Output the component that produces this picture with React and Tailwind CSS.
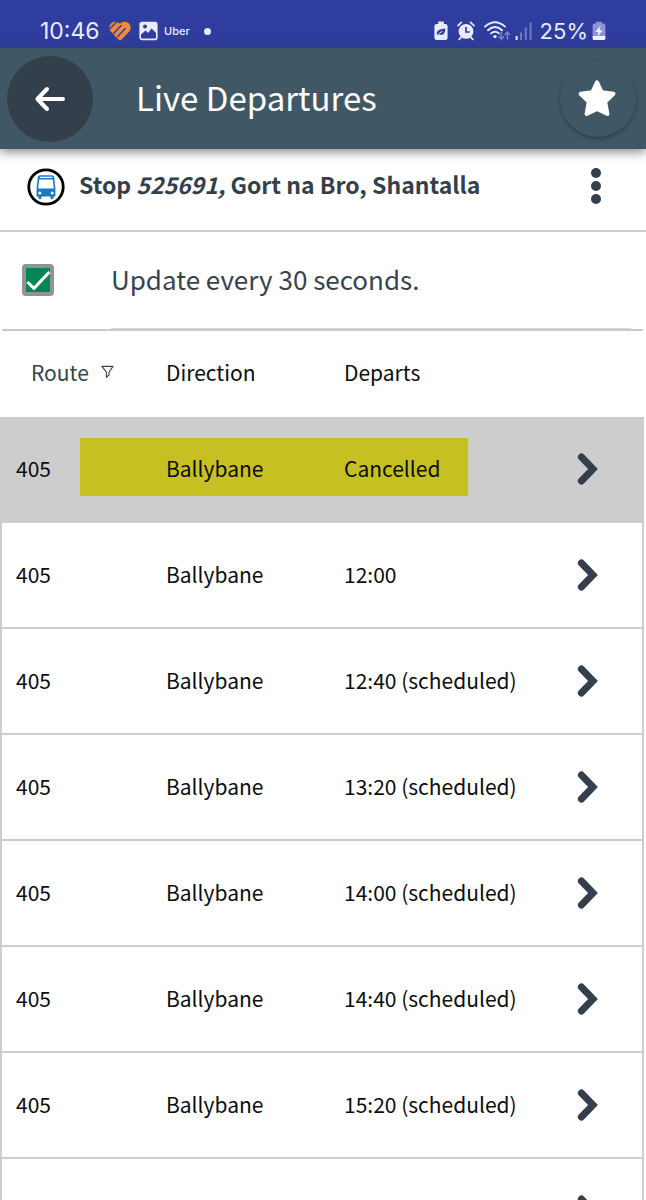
import { useState } from 'react';

const departures = [
  { route: '405', direction: 'Ballybane', departs: 'Cancelled', cancelled: true },
  { route: '405', direction: 'Ballybane', departs: '12:00' },
  { route: '405', direction: 'Ballybane', departs: '12:40 (scheduled)' },
  { route: '405', direction: 'Ballybane', departs: '13:20 (scheduled)' },
  { route: '405', direction: 'Ballybane', departs: '14:00 (scheduled)' },
  { route: '405', direction: 'Ballybane', departs: '14:40 (scheduled)' },
  { route: '405', direction: 'Ballybane', departs: '15:20 (scheduled)' },
  { route: '', direction: '', departs: '' },
];

function HeartIcon() {
  return (
    <svg width="22" height="20" viewBox="0 0 22 20" fill="none" strokeLinecap="round" aria-hidden="true">
      <path d="M11 3 C9 0.2 4.4 0 2 2.6 C-0.4 5.2 0 8.6 2.2 11 L9.4 18.6 Q11 20 12.6 18.6 L19.8 11 C22 8.6 22.4 5.2 20 2.6 C17.6 0 13 0.2 11 3 Z" fill="#f5893b" />
      <path d="M0.6 8 L7.6 1" stroke="#2f3d9e" strokeWidth="1.3" />
      <path d="M4.6 12.4 L12.2 4.4" stroke="#2f3d9e" strokeWidth="1.4" />
      <path d="M8.8 15.6 L16.2 7.6" stroke="#2f3d9e" strokeWidth="1.4" />
    </svg>
  );
}

function PictureIcon() {
  return (
    <svg width="19" height="20" viewBox="0 0 19 20" aria-hidden="true">
      <rect x="0.4" y="0.8" width="18.2" height="18.4" rx="2.6" fill="#e9ebfa" />
      <path d="M2 13.6 L6.6 9.4 L9 12 L12.6 7.6 L17 12 V16.4 Q17 17.4 16 17.4 H3 Q2 17.4 2 16.4 Z" fill="#2f3d9e" />
      <circle cx="6" cy="5.4" r="2" fill="#2f3d9e" />
    </svg>
  );
}

function BatterySaverIcon() {
  return (
    <svg width="14" height="20" viewBox="0 0 14 20" aria-hidden="true">
      <path d="M4.2 0.6 H9.8 V3 H11.4 Q13.6 3 13.6 5.2 V16.8 Q13.6 19 11.4 19 H2.6 Q0.4 19 0.4 16.8 V5.2 Q0.4 3 2.6 3 H4.2 Z" fill="#e9ebfa" />
      <path d="M2.8 13.6 C2.6 9 5.4 8.2 11.2 7.4 C11.4 12 9.2 15 5 13.4 M3 14.4 L8.2 10.4" fill="#2f3d9e" />
      <path d="M4.6 13 L8.4 10" stroke="#e9ebfa" strokeWidth="1" />
    </svg>
  );
}

function AlarmIcon() {
  return (
    <svg width="18" height="20" viewBox="0 0 18 20" aria-hidden="true">
      <circle cx="9" cy="10.4" r="7.4" fill="#e9ebfa" />
      <path d="M1 4.6 L4.4 1.4 M17 4.6 L13.6 1.4 M4 16.4 L2.2 18.4 M14 16.4 L15.8 18.4" stroke="#e9ebfa" strokeWidth="1.7" strokeLinecap="round" />
      <path d="M9 6 V11 H12.8" fill="none" stroke="#2f3d9e" strokeWidth="1.7" />
    </svg>
  );
}

function WifiIcon() {
  return (
    <svg width="27" height="20" viewBox="0 0 27 20" fill="none" strokeLinecap="round" aria-hidden="true">
      <path d="M1 5.6 Q11 -3 21 5.6" stroke="#e9ebfa" strokeWidth="1.9" />
      <path d="M4 9.2 Q11 3 18 9.2" stroke="#e9ebfa" strokeWidth="1.9" />
      <path d="M7 12.4 Q11 9 15 12.4" stroke="#e9ebfa" strokeWidth="1.9" />
      <circle cx="11" cy="15.6" r="1.7" fill="#e9ebfa" />
      <path d="M17.4 11.2 V18 M15.2 15.8 L17.4 18.2 L19.6 15.8 M23.4 18 V11.2 M21.2 13.4 L23.4 11 L25.6 13.4" stroke="#7b84cd" strokeWidth="1.5" />
    </svg>
  );
}

function SignalIcon() {
  return (
    <svg width="17" height="20" viewBox="0 0 17 20" strokeWidth="2" aria-hidden="true">
      <path d="M1.6 15 V19" stroke="#e9ebfa" />
      <path d="M6 11.6 V19 M10.8 6.4 V19 M15.6 1.4 V19" stroke="#7079c6" />
    </svg>
  );
}

function ChargingIcon() {
  return (
    <svg width="14" height="20" viewBox="0 0 14 20" aria-hidden="true">
      <path d="M4 0.8 H10 V2.6 H11.6 Q13.4 2.6 13.4 4.4 V15 H0.6 V4.4 Q0.6 2.6 2.4 2.6 H4 Z" fill="#8c94d6" />
      <path d="M0.6 15 H13.4 V17.4 Q13.4 19 11.8 19 H2.2 Q0.6 19 0.6 17.4 Z" fill="#f2f3fc" />
      <path d="M8.4 4.8 L3.4 11 H6.4 L5.6 15.4 L10.6 9.2 H7.6 Z" fill="#f2f3fc" />
    </svg>
  );
}

function BackIcon() {
  return (
    <svg width="32" height="26" viewBox="0 0 32 26" fill="none" stroke="#fff" strokeWidth="4" strokeLinecap="round" strokeLinejoin="round" aria-hidden="true">
      <path d="M29 13 H4 M13 3 L3.4 13 L13 23" />
    </svg>
  );
}

function StarIcon() {
  return (
    <svg width="38" height="38" viewBox="0 0 38 38" fill="#fff" stroke="#fff" strokeWidth="4" strokeLinejoin="round" aria-hidden="true">
      <path d="M19 2.4 L23.6 12.2 L35.4 13.8 L27.2 21.8 L29.4 34 L19 29 L8.6 34 L10.8 21.8 L2.6 13.8 L14.4 12.2 Z" />
    </svg>
  );
}

function BusIcon() {
  return (
    <svg className="shrink-0" width="38" height="38" viewBox="0 0 38 38" aria-hidden="true">
      <circle cx="19" cy="19" r="17.2" fill="#fff" stroke="#000" strokeWidth="2.8" />
      <path d="M13.2 7.2 H24.8 Q27 7.2 27.3 10 L28.4 20 V28.6 H26.6 V29.6 Q26.6 31.2 25 31.2 Q23.4 31.2 23.4 29.6 V28.6 H14.6 V29.6 Q14.6 31.2 13 31.2 Q11.4 31.2 11.4 29.6 V28.6 H9.6 V20 L10.7 10 Q11 7.2 13.2 7.2 Z" fill="#1f78bd" />
      <path d="M12.2 11.6 H25.8 L26.8 20.4 H11.2 Z" fill="#fff" />
      <path d="M13.4 9.4 H24.6" stroke="#fff" strokeWidth="1.3" strokeLinecap="round" />
      <circle cx="12.8" cy="25" r="1.5" fill="#fff" />
      <circle cx="25.2" cy="25" r="1.5" fill="#fff" />
    </svg>
  );
}

function FilterIcon() {
  return (
    <svg width="13" height="14" viewBox="0 0 13 14" fill="none" stroke="#38434d" strokeWidth="1.1" strokeLinejoin="round" aria-hidden="true">
      <path d="M1 1.4 H12 L8 7.2 V10 L5.4 12.4 V7.2 Z" />
    </svg>
  );
}

function ChevronIcon() {
  return (
    <svg width="22" height="34" viewBox="0 0 22 34" fill="none" stroke="#333f4a" strokeWidth="7" strokeLinecap="round" aria-hidden="true">
      <path d="M5.4 5 L17 17 L5.4 29" />
    </svg>
  );
}

function StatusBar() {
  return (
    <div className="flex h-12 shrink-0 items-end justify-between bg-[#2f3d9e] pr-10 pb-[3px] pl-10 font-['Inter',sans-serif] text-[#e9ebfa]">
      <div className="flex h-7 items-center">
        <span className="w-[69px] text-[23px]">10:46</span>
        <HeartIcon />
        <span className="ml-2">
          <PictureIcon />
        </span>
        <span className="ml-1.5 text-[11px] font-medium">Uber</span>
        <span className="ml-3.5 size-[7px] rounded-full bg-[#e9ebfa]" />
      </div>
      <div className="flex h-7 items-center gap-2">
        <div className="flex items-center gap-[9px]">
          <BatterySaverIcon />
          <AlarmIcon />
          <WifiIcon />
        </div>
        <div className="-ml-1 flex items-center gap-2">
          <SignalIcon />
          <span className="text-[22px]">25%</span>
        </div>
        <span className="-ml-1">
          <ChargingIcon />
        </span>
      </div>
    </div>
  );
}

function Header() {
  return (
    <header className="z-10 flex h-[101px] shrink-0 items-center bg-[#405865] pr-2.5 pl-[7px] text-white shadow-[0_3px_10px_rgba(60,50,50,0.6)]">
      <button type="button" aria-label="Back" className="flex size-[86px] items-center justify-center rounded-full bg-[#333f4a]">
        <BackIcon />
      </button>
      <h1 className="ml-[43px] flex-1 pb-1 text-[33px] leading-10">Live Departures</h1>
      <button type="button" aria-label="Favourite" className="flex size-[76px] items-center justify-center rounded-full bg-[#405865] pr-0.5 shadow-[0_2px_4px_rgba(0,0,0,0.3)]">
        <StarIcon />
      </button>
    </header>
  );
}

export default function App() {
  const [autoUpdate, setAutoUpdate] = useState(true);

  return (
    <div className="flex h-screen flex-col overflow-hidden bg-white font-['Noto_Sans_CJK_SC',sans-serif] text-[21px] leading-8 text-[#0c0d0e]">
      <StatusBar />
      <Header />

      <main className="min-h-0 flex-1 overflow-y-auto [scrollbar-width:none]">
        <section className="flex h-[83px] items-center border-b-2 border-[#cbcbcb] pr-10 pb-1.5 pl-[27px] text-[#333f4a]">
          <BusIcon />
          <h2 className="ml-3.5 flex-1 pb-1.5 text-[23px] font-bold">
            Stop <em>525691,</em> Gort na Bro, Shantalla
          </h2>
          <button type="button" aria-label="More options" className="flex w-5 flex-col items-center gap-[3px] pb-0.5">
            <span className="size-2.5 rounded-full bg-[#333f4a]" />
            <span className="size-2.5 rounded-full bg-[#333f4a]" />
            <span className="size-2.5 rounded-full bg-[#333f4a]" />
          </button>
        </section>

        <div className="mr-[3px] ml-0.5 border-b-2 border-[#cbcbcb]">
          <div className="flex h-24 items-center pl-5">
            <span className="relative flex size-8">
              <input
                id="auto-update"
                type="checkbox"
                checked={autoUpdate}
                onChange={(e) => setAutoUpdate(e.target.checked)}
                className="peer size-8 appearance-none rounded border-4 border-[#929292] bg-white checked:bg-[#058653]"
              />
              <svg className="pointer-events-none absolute inset-0 hidden peer-checked:block" width="32" height="32" viewBox="0 0 32 32" fill="none" stroke="#fff" strokeWidth="3" aria-hidden="true">
                <path d="M5.4 18 L12 24.4 L27.4 8" />
              </svg>
            </span>
            <label htmlFor="auto-update" className="ml-[57px] pb-0.5 text-[26px] text-[#38434d]">
              Update every 30 seconds.
            </label>
          </div>
          <div className="mr-3 ml-[109px] h-px bg-[#d8d8d8]" />
        </div>

        <div className="pr-0.5">
          <table className="w-full table-fixed border-separate border-spacing-0 text-left">
            <thead>
              <tr className="h-[86px]">
                <th className="w-[151px] pb-1 pl-[31px] font-normal text-[#38434d]">
                  <button type="button" className="flex items-center gap-3">
                    Route
                    <FilterIcon />
                  </button>
                </th>
                <th className="w-[178px] pb-1 pl-[15px] font-normal">Direction</th>
                <th className="pb-1 pl-[15px] font-normal">Departs</th>
                <th className="w-[84px]" aria-label="Details" />
              </tr>
            </thead>
            <tbody>
              {departures.map((item, i) => (
                <tr key={i} className={item.cancelled ? 'h-[106px] bg-[#cdcdcd]' : 'h-[106px]'}>
                  <td className="border-b-2 border-l-2 border-[#cdcdcd] pb-0.5 pl-3.5">{item.route}</td>
                  <td className="relative border-b-2 border-[#cdcdcd] pb-0.5 pl-[15px]">
                    {item.cancelled && (
                      <span className="absolute top-[21px] -left-[71px] h-[58px] w-[388px] bg-[#c7c022]" />
                    )}
                    <span className="relative">{item.direction}</span>
                  </td>
                  <td className="relative border-b-2 border-[#cdcdcd] pb-0.5 pl-[15px]">{item.departs}</td>
                  <td className="border-r-2 border-b-2 border-[#cdcdcd] pl-4">
                    <button type="button" aria-label="Show details" className="flex">
                      <ChevronIcon />
                    </button>
                  </td>
                </tr>
              ))}
            </tbody>
          </table>
        </div>
      </main>
    </div>
  );
}
